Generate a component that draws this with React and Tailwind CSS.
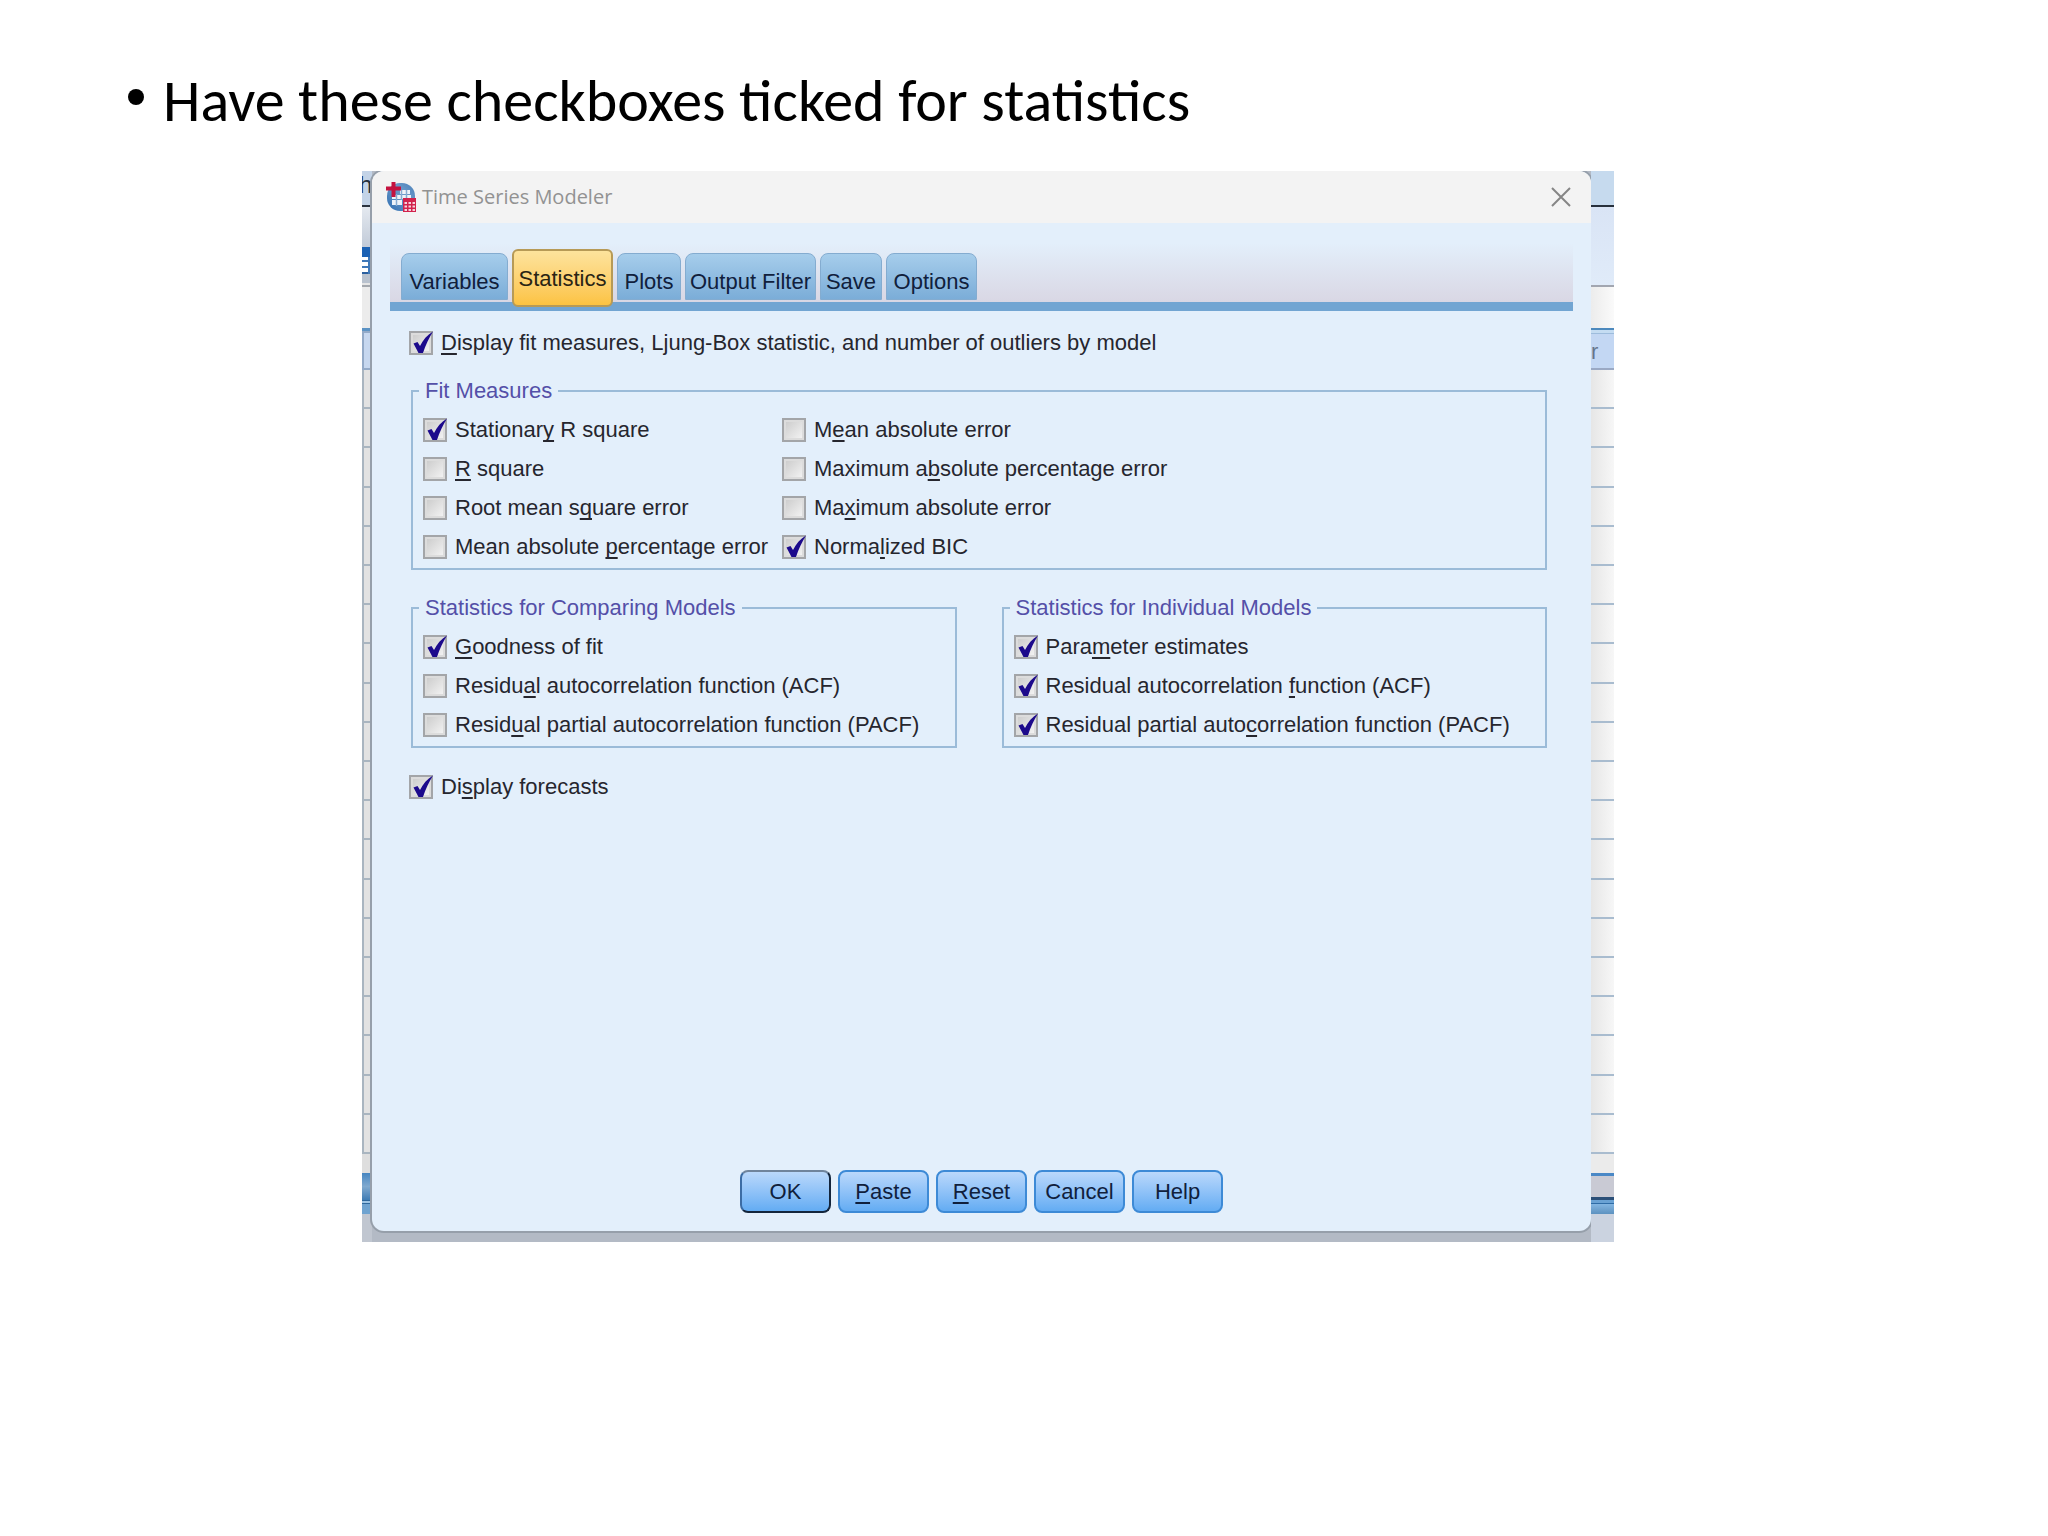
import { useState } from 'react';

const TABS = [
  { name: 'Variables', width: 'w-[107px]' },
  { name: 'Statistics', width: 'w-[101px]' },
  { name: 'Plots', width: 'w-[64px]' },
  { name: 'Output Filter', width: 'w-[131px]' },
  { name: 'Save', width: 'w-[62px]' },
  { name: 'Options', width: 'w-[91px]' },
];

const FIT_LEFT = [
  { id: 'stationary', before: 'Stationar', key: 'y', after: ' R square', checked: true },
  { id: 'rsquare', before: '', key: 'R', after: ' square' },
  { id: 'rmse', before: 'Root mean s', key: 'q', after: 'uare error' },
  { id: 'mape', before: 'Mean absolute ', key: 'p', after: 'ercentage error' },
];

const FIT_RIGHT = [
  { id: 'mae', before: 'M', key: 'e', after: 'an absolute error' },
  { id: 'maxape', before: 'Maximum a', key: 'b', after: 'solute percentage error' },
  { id: 'maxae', before: 'Ma', key: 'x', after: 'imum absolute error' },
  { id: 'bic', before: 'Norma', key: 'l', after: 'ized BIC', checked: true },
];

const COMPARING = [
  { id: 'goodness', before: '', key: 'G', after: 'oodness of fit', checked: true },
  { id: 'cmp-acf', before: 'Residu', key: 'a', after: 'l autocorrelation function (ACF)' },
  { id: 'cmp-pacf', before: 'Resid', key: 'u', after: 'al partial autocorrelation function (PACF)' },
];

const INDIVIDUAL = [
  { id: 'params', before: 'Para', key: 'm', after: 'eter estimates', checked: true },
  { id: 'ind-acf', before: 'Residual autocorrelation ', key: 'f', after: 'unction (ACF)', checked: true },
  { id: 'ind-pacf', before: 'Residual partial auto', key: 'c', after: 'orrelation function (PACF)', checked: true },
];

const BUTTONS = [
  { key: '', after: 'OK', primary: true },
  { key: 'P', after: 'aste' },
  { key: 'R', after: 'eset' },
  { key: '', after: 'Cancel' },
  { key: '', after: 'Help' },
];

const GRID_ROWS = Array.from({ length: 20 }, (_, i) => i);

const Mnemonic = ({ before = '', letter, after }) => (
  <span className="whitespace-pre">
    {before}
    {letter && <span className="underline decoration-2 underline-offset-3 [text-decoration-skip-ink:none]">{letter}</span>}
    {after}
  </span>
);

const Check = ({ item }) => {
  const [checked, setChecked] = useState(!!item.checked);

  return (
    <div className="flex h-[39px] items-center gap-2">
      <span className="grid shrink-0">
        <input
          id={item.id}
          type="checkbox"
          checked={checked}
          onChange={() => setChecked(!checked)}
          className="col-start-1 row-start-1 size-6 appearance-none border-2 border-[#a3a5a8] bg-linear-to-br from-[#c9c9c9] to-[#f6f6f6] shadow-[inset_0_0_0_2px_#dcdcdc]"
        />
        {checked && (
          <svg viewBox="0 0 24 24" className="pointer-events-none col-start-1 row-start-1 size-6">
            <path d="M4.500 12.500 L8.500 11 L11 15 C14 9 18 4 24 0.500 C20 7 16.500 14 14 22 L9.500 22 Z" fill="#1c0a8c" />
          </svg>
        )}
      </span>
      <label htmlFor={item.id} className="whitespace-nowrap">
        <Mnemonic before={item.before} letter={item.key} after={item.after} />
      </label>
    </div>
  );
};

const Group = ({ title, children }) => (
  <fieldset className="min-w-0 border-2 border-[#9bbbd8] px-[10px] pb-[2px]">
    <legend className="-ml-[4px] px-[6px] leading-6 text-[#5450a8]">{title}</legend>
    <div className="pt-[7px]">{children}</div>
  </fieldset>
);

const AppIcon = () => (
  <svg viewBox="0 0 30 30" className="size-[30px]">
    <defs>
      <linearGradient id="globe" x1="0" y1="1" x2="1" y2="0">
        <stop offset="0" stopColor="#2f6db0" />
        <stop offset="0.600" stopColor="#6c9bcb" />
        <stop offset="1" stopColor="#4a7fb8" />
      </linearGradient>
    </defs>
    <rect x="1" y="1" width="28" height="28" rx="13" fill="url(#globe)" />
    <path d="M14 8 H24 V12 H14 Z M6 13 H25 V17 H6 Z M6 18 H16 V23 H6 Z" fill="#eef3f9" />
    <path d="M10.500 12 V24 M15.500 8 V18 M20.500 8 V18" stroke="#86abd2" strokeWidth="1.500" />
    <path d="M7.500 0 V15 M0 6.500 H15" stroke="#c4123f" strokeWidth="4" />
    <path d="M17 16 H30 V30 H17 Z" fill="#d2224c" />
    <path d="M18.500 21 H29 M18.500 24.500 H29 M18.500 28 H29" stroke="#f6d3dc" strokeWidth="2" strokeDasharray="2.500 1.500" />
  </svg>
);

// Slivers of the data editor that stick out on both sides of the dialog
const LeftEdge = () => (
  <div className="flex flex-col overflow-hidden">
    <div className="h-[34px] bg-[#c3d3e7] text-2xl leading-7 text-[#26303c]">
      <span className="-ml-[3px] block">h</span>
    </div>
    <div className="h-[2px] bg-[#2c3440]" />
    <div className="h-[40px] bg-linear-to-b from-[#e4e9f0] to-[#c2cbd8]" />
    <div className="h-[10px] bg-[#1c62b4]" />
    <div className="flex h-[17px] bg-white">
      <div className="flex flex-1 flex-col justify-between pt-[3px]">
        <div className="h-[2px] bg-[#3f78b8]" />
        <div className="h-[2px] bg-[#3f78b8]" />
        <div className="h-[2px] bg-[#2a5f9e]" />
      </div>
      <div className="w-[2px] bg-[#3f78b8]" />
      <div className="w-[2px] bg-[#c2cbd8]" />
    </div>
    <div className="h-[9px] bg-[#b9c2ce]" />
    <div className="h-[4px] border-b-2 border-[#a4a8ae] bg-[#e6e6e6]" />
    <div className="h-[41px] bg-[#ececec]" />
    <div className="h-[3px] bg-[#5c93c4]" />
    <div className="h-[39px] border-2 border-r-0 border-[#93aac8] bg-[#c6d7ef]" />
    <div className="flex flex-1 flex-col">
      {GRID_ROWS.map((row) => (
        <div key={row} className="flex-1 border-b-2 border-l-2 border-[#a9b5c0] bg-[#e2e2e2]" />
      ))}
    </div>
    <div className="h-[19px] bg-[#dedede]" />
    <div className="h-[27px] bg-linear-to-b from-[#4585c0] via-[#7fa9cf] to-[#3f7cb4]" />
    <div className="h-[4px] border-y border-[#2f689c] bg-[#9cc4e4]" />
    <div className="h-[10px] bg-[#6fa3d0]" />
    <div className="h-[28px] bg-[#c0c6d0]" />
  </div>
);

const RightEdge = () => (
  <div className="flex flex-col overflow-hidden">
    <div className="h-[34px] bg-[#c6daee]" />
    <div className="h-[2px] bg-[#27303c]" />
    <div className="h-[80px] border-b-2 border-[#a2a6b0] bg-linear-to-b from-[#d9e4f5] to-[#e0ebf9]" />
    <div className="h-[41px] bg-linear-to-r from-[#ececec] to-[#fafafa]" />
    <div className="h-[2px] bg-[#4d89bd]" />
    <div className="h-[4px] border-b border-[#9dbcdc] bg-[#c4dcf2]" />
    <div className="h-[36px] border-b-2 border-[#9aa9c4] bg-[#c3d7f3] text-[22px] leading-9 text-[#66758c]">r</div>
    <div className="flex flex-1 flex-col">
      {GRID_ROWS.map((row) => (
        <div key={row} className="flex-1 border-b-2 border-[#a9bccf] bg-linear-to-r from-[#e6e6e6] to-[#f7f7f7]" />
      ))}
    </div>
    <div className="h-[19px] bg-[#ebebeb]" />
    <div className="h-[3px] bg-[#4a88c6]" />
    <div className="h-[21px] bg-[#c9cad4]" />
    <div className="h-[3px] bg-[#2b4f78]" />
    <div className="h-[4px] border-b border-[#2f6ca6] bg-[#6aa2d4]" />
    <div className="h-[10px] bg-linear-to-b from-[#84b6e2] to-[#5d92c0]" />
    <div className="h-[28px] bg-[#cbd3e0]" />
  </div>
);

const TabBar = ({ active, onSelect }) => (
  <div role="tablist" className="flex h-[68px] items-end gap-1 border-b-9 border-[#72a5d2] bg-linear-to-b from-[#e3effb] to-[#d9d7e4] pl-[11px]">
    {TABS.map((tab) => (
      <button
        key={tab.name}
        role="tab"
        type="button"
        aria-selected={tab.name === active}
        onClick={() => onSelect(tab.name)}
        className={`whitespace-nowrap text-center ${tab.width} ${
          tab.name === active
            ? '-mb-[5px] h-[58px] rounded-md border-2 border-[#b79a56] bg-linear-to-b from-[#fde39c] to-[#fcc341] text-[#2a2414]'
            : 'mb-[2px] h-[47px] rounded-t-lg border border-[#84acd0] bg-linear-to-b from-[#a6cdeb] to-[#7badd8] pt-[10px] text-[#10203c]'
        }`}
      >
        {tab.name}
      </button>
    ))}
  </div>
);

const TimeSeriesModeler = () => {
  const [tab, setTab] = useState('Statistics');

  return (
    <section className="flex flex-col overflow-hidden rounded-xl bg-[#e3effb] shadow-[0_0_0_2px_#969faa]">
      <header className="flex h-[52px] items-center bg-[#f3f3f3] pr-[19px] pl-[14px]">
        <AppIcon />
        <h2 className="ml-[6px] flex-1 font-['Open_Sans',sans-serif] text-xl text-[#929292]">Time Series Modeler</h2>
        <button type="button" aria-label="Close" className="text-[#858585]">
          <svg viewBox="0 0 22 22" className="size-[22px]">
            <path d="M2 2 L20 20 M20 2 L2 20" stroke="currentColor" strokeWidth="2" fill="none" />
          </svg>
        </button>
      </header>

      <div className="px-[18px] pt-[20px] text-[22px]">
        <TabBar active={tab} onSelect={setTab} />
      </div>

      <div className="flex flex-1 flex-col pr-[44px] pl-[37px] text-[22px] text-[#26262e]">
        <div className="pt-[12px]">
          <Check item={{ id: 'fit', before: '', key: 'D', after: 'isplay fit measures, Ljung-Box statistic, and number of outliers by model', checked: true }} />
        </div>
        <div className="mt-[17px] pl-[2px]">
          <Group title="Fit Measures">
            <div className="flex">
              <div className="w-[359px]">
                {FIT_LEFT.map((item) => <Check key={item.id} item={item} />)}
              </div>
              <div>
                {FIT_RIGHT.map((item) => <Check key={item.id} item={item} />)}
              </div>
            </div>
          </Group>
          <div className="mt-[26px] grid grid-cols-2 gap-[45px]">
            <Group title="Statistics for Comparing Models">
              {COMPARING.map((item) => <Check key={item.id} item={item} />)}
            </Group>
            <Group title="Statistics for Individual Models">
              {INDIVIDUAL.map((item) => <Check key={item.id} item={item} />)}
            </Group>
          </div>
        </div>
        <div className="mt-[19px]">
          <Check item={{ id: 'forecasts', before: 'Di', key: 's', after: 'play forecasts', checked: true }} />
        </div>
      </div>

      <footer className="flex justify-center gap-[7px] pt-[364px] pb-[18px] text-[22px] text-[#10203c]">
        {BUTTONS.map((button) => (
          <button
            key={button.after}
            type="button"
            className={`h-[43px] w-[91px] rounded-lg border-2 bg-linear-to-b from-[#bad8fb] to-[#63acf3] ${
              button.primary ? 'border-t-[#70849c] border-r-[#13253c] border-b-[#13253c] border-l-[#3c6ca4]' : 'border-[#3d8ad6]'
            }`}
          >
            <Mnemonic letter={button.key} after={button.after} />
          </button>
        ))}
      </footer>
    </section>
  );
};

const App = () => {
  return (
    <main className="min-h-screen bg-white pt-[68px] font-['Liberation_Sans',Arial,sans-serif]">
      <ul className="px-[128px] font-[Carlito,Lato,sans-serif] text-[60px] leading-[66px] text-black">
        <li className="flex items-center gap-[19px]">
          <span className="mb-2 size-4 rounded-full bg-black" />
          <span>Have these checkboxes ticked for statistics</span>
        </li>
      </ul>
      <div className="mt-[37px] mr-[434px] ml-[362px] grid grid-cols-[10px_minmax(0,1fr)_23px] overflow-hidden bg-[#b3bac5]">
        <LeftEdge />
        <div className="pb-[11px]">
          <TimeSeriesModeler />
        </div>
        <RightEdge />
      </div>
    </main>
  );
};

export default App;
